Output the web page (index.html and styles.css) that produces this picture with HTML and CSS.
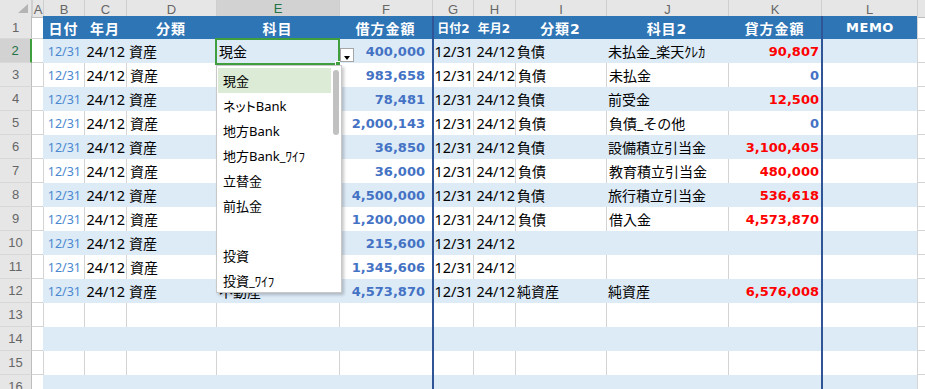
FILE: index.html
```html
<!DOCTYPE html>
<html lang="ja">
<head>
<meta charset="utf-8">
<title>Sheet</title>
<link rel="stylesheet" href="styles.css">
</head>
<body>
<div class="sheet">
  <div class="row colhdr">
    <div class="hd corner"><svg width="32" height="16" viewBox="0 0 32 16"><polygon points="18,13 28,13 28,4" fill="#b4b4b4"/></svg></div>
    <div class="hd">A</div><div class="hd">B</div><div class="hd">C</div><div class="hd">D</div>
    <div class="hd act">E</div><div class="hd">F</div><div class="hd">G</div><div class="hd">H</div>
    <div class="hd">I</div><div class="hd">J</div><div class="hd">K</div><div class="hd">L</div><div class="hd"></div>
  </div>

  <div class="row hdr">
    <div class="rn">1</div><div class="c-a"></div>
    <div class="d">日付</div><div class="d">年月</div><div class="d">分類</div><div class="d">科目</div>
    <div class="d">借方金額</div><div class="d c-g sm">日付2</div><div class="d sm">年月2</div>
    <div class="d">分類2</div><div class="d">科目2</div><div class="d">貸方金額</div><div class="d c-l memo">MEMO</div>
    <div class="c-m"></div>
  </div>

  <div class="row alt">
    <div class="rn act">2</div><div class="c-a"></div>
    <div class="d c-b">12/31</div><div class="d c-c">24/12</div><div class="d c-d">資産</div><div class="d c-e">現金</div>
    <div class="d c-f amt blue">400,000</div><div class="d c-g">12/31</div><div class="d c-h">24/12</div>
    <div class="d c-i">負債</div><div class="d c-j">未払金_楽天ｸﾚｶ</div><div class="d c-k amt red">90,807</div><div class="d c-l"></div>
    <div class="c-m"></div>
  </div>

  <div class="row w">
    <div class="rn">3</div><div class="c-a"></div>
    <div class="d c-b">12/31</div><div class="d c-c">24/12</div><div class="d c-d">資産</div><div class="d c-e"></div>
    <div class="d c-f amt blue">983,658</div><div class="d c-g">12/31</div><div class="d c-h">24/12</div>
    <div class="d c-i">負債</div><div class="d c-j">未払金</div><div class="d c-k amt blue">0</div><div class="d c-l"></div>
    <div class="c-m"></div>
  </div>

  <div class="row alt">
    <div class="rn">4</div><div class="c-a"></div>
    <div class="d c-b">12/31</div><div class="d c-c">24/12</div><div class="d c-d">資産</div><div class="d c-e"></div>
    <div class="d c-f amt blue">78,481</div><div class="d c-g">12/31</div><div class="d c-h">24/12</div>
    <div class="d c-i">負債</div><div class="d c-j">前受金</div><div class="d c-k amt red">12,500</div><div class="d c-l"></div>
    <div class="c-m"></div>
  </div>

  <div class="row w">
    <div class="rn">5</div><div class="c-a"></div>
    <div class="d c-b">12/31</div><div class="d c-c">24/12</div><div class="d c-d">資産</div><div class="d c-e"></div>
    <div class="d c-f amt blue">2,000,143</div><div class="d c-g">12/31</div><div class="d c-h">24/12</div>
    <div class="d c-i">負債</div><div class="d c-j">負債_その他</div><div class="d c-k amt blue">0</div><div class="d c-l"></div>
    <div class="c-m"></div>
  </div>

  <div class="row alt">
    <div class="rn">6</div><div class="c-a"></div>
    <div class="d c-b">12/31</div><div class="d c-c">24/12</div><div class="d c-d">資産</div><div class="d c-e"></div>
    <div class="d c-f amt blue">36,850</div><div class="d c-g">12/31</div><div class="d c-h">24/12</div>
    <div class="d c-i">負債</div><div class="d c-j">設備積立引当金</div><div class="d c-k amt red">3,100,405</div><div class="d c-l"></div>
    <div class="c-m"></div>
  </div>

  <div class="row w">
    <div class="rn">7</div><div class="c-a"></div>
    <div class="d c-b">12/31</div><div class="d c-c">24/12</div><div class="d c-d">資産</div><div class="d c-e"></div>
    <div class="d c-f amt blue">36,000</div><div class="d c-g">12/31</div><div class="d c-h">24/12</div>
    <div class="d c-i">負債</div><div class="d c-j">教育積立引当金</div><div class="d c-k amt red">480,000</div><div class="d c-l"></div>
    <div class="c-m"></div>
  </div>

  <div class="row alt">
    <div class="rn">8</div><div class="c-a"></div>
    <div class="d c-b">12/31</div><div class="d c-c">24/12</div><div class="d c-d">資産</div><div class="d c-e"></div>
    <div class="d c-f amt blue">4,500,000</div><div class="d c-g">12/31</div><div class="d c-h">24/12</div>
    <div class="d c-i">負債</div><div class="d c-j">旅行積立引当金</div><div class="d c-k amt red">536,618</div><div class="d c-l"></div>
    <div class="c-m"></div>
  </div>

  <div class="row w">
    <div class="rn">9</div><div class="c-a"></div>
    <div class="d c-b">12/31</div><div class="d c-c">24/12</div><div class="d c-d">資産</div><div class="d c-e"></div>
    <div class="d c-f amt blue">1,200,000</div><div class="d c-g">12/31</div><div class="d c-h">24/12</div>
    <div class="d c-i">負債</div><div class="d c-j">借入金</div><div class="d c-k amt red">4,573,870</div><div class="d c-l"></div>
    <div class="c-m"></div>
  </div>

  <div class="row alt">
    <div class="rn">10</div><div class="c-a"></div>
    <div class="d c-b">12/31</div><div class="d c-c">24/12</div><div class="d c-d">資産</div><div class="d c-e"></div>
    <div class="d c-f amt blue">215,600</div><div class="d c-g">12/31</div><div class="d c-h">24/12</div>
    <div class="d c-i"></div><div class="d c-j"></div><div class="d c-k"></div><div class="d c-l"></div>
    <div class="c-m"></div>
  </div>

  <div class="row w">
    <div class="rn">11</div><div class="c-a"></div>
    <div class="d c-b">12/31</div><div class="d c-c">24/12</div><div class="d c-d">資産</div><div class="d c-e"></div>
    <div class="d c-f amt blue">1,345,606</div><div class="d c-g">12/31</div><div class="d c-h">24/12</div>
    <div class="d c-i"></div><div class="d c-j"></div><div class="d c-k"></div><div class="d c-l"></div>
    <div class="c-m"></div>
  </div>

  <div class="row alt">
    <div class="rn">12</div><div class="c-a"></div>
    <div class="d c-b">12/31</div><div class="d c-c">24/12</div><div class="d c-d">資産</div><div class="d c-e under">不動産</div>
    <div class="d c-f amt blue">4,573,870</div><div class="d c-g">12/31</div><div class="d c-h">24/12</div>
    <div class="d c-i">純資産</div><div class="d c-j">純資産</div><div class="d c-k amt red">6,576,008</div><div class="d c-l"></div>
    <div class="c-m"></div>
  </div>

  <div class="row w">
    <div class="rn">13</div><div class="c-a"></div>
    <div class="d"></div><div class="d"></div><div class="d"></div><div class="d"></div><div class="d"></div>
    <div class="d c-g"></div><div class="d"></div><div class="d"></div><div class="d"></div><div class="d"></div><div class="d c-l"></div>
    <div class="c-m"></div>
  </div>
  <div class="row alt">
    <div class="rn">14</div><div class="c-a"></div>
    <div class="d"></div><div class="d"></div><div class="d"></div><div class="d"></div><div class="d"></div>
    <div class="d c-g"></div><div class="d"></div><div class="d"></div><div class="d"></div><div class="d"></div><div class="d c-l"></div>
    <div class="c-m"></div>
  </div>
  <div class="row w">
    <div class="rn">15</div><div class="c-a"></div>
    <div class="d"></div><div class="d"></div><div class="d"></div><div class="d"></div><div class="d"></div>
    <div class="d c-g"></div><div class="d"></div><div class="d"></div><div class="d"></div><div class="d"></div><div class="d c-l"></div>
    <div class="c-m"></div>
  </div>
  <div class="row alt">
    <div class="rn">16</div><div class="c-a"></div>
    <div class="d"></div><div class="d"></div><div class="d"></div><div class="d"></div><div class="d"></div>
    <div class="d c-g"></div><div class="d"></div><div class="d"></div><div class="d"></div><div class="d"></div><div class="d c-l"></div>
    <div class="c-m"></div>
  </div>

  <div class="selbox"></div>
  <div class="handle"></div>
  <div class="ddbtn"><span class="tri"></span></div>
  <div class="ddlist">
    <div class="item on">現金</div>
    <div class="item">ネットBank</div>
    <div class="item">地方Bank</div>
    <div class="item">地方Bank_ﾜｲﾌ</div>
    <div class="item">立替金</div>
    <div class="item">前払金</div>
    <div class="item"></div>
    <div class="item">投資</div>
    <div class="item">投資_ﾜｲﾌ</div>
    <div class="thumb"></div>
  </div>
</div>
</body>
</html>
```

FILE: styles.css
```css
html, body {
  margin: 0;
  padding: 0;
  background: #ffffff;
  overflow: hidden;
}

.sheet {
  position: relative;
  width: 925px;
  height: 389px;
  overflow: hidden;
  font-family: "Noto Sans", "Noto Sans CJK JP", sans-serif;
}

.row {
  display: grid;
  grid-template-columns: 32px 11px 41px 42px 90px 123px 93px 41px 42px 91px 122px 93px 96px 1fr;
  height: 24px;
}

.row > div {
  box-sizing: border-box;
  display: flex;
  align-items: center;
  white-space: nowrap;
  min-width: 0;
}

/* column header strip */
.row.colhdr {
  height: 16px;
}
.hd {
  background: #e6e6e6;
  border-left: 1px solid #cfcfcf;
  border-bottom: 1px solid #bdbdbd;
  justify-content: center;
  font-family: "Liberation Sans", sans-serif;
  font-size: 13px;
  color: #666666;
  padding-top: 1px;
}
.hd.corner {
  border-left: none;
  border-right: 1px solid #cfcfcf;
  padding: 0;
  display: block;
}
.hd.corner svg {
  display: block;
}
.hd.act {
  background: #d2d2d2;
  color: #217346;
  border-bottom: 2px solid #3f9f3f;
}

/* row numbers */
.rn {
  background: #e6e6e6;
  border-right: 1px solid #bdbdbd;
  border-bottom: 1px solid #d8d8d8;
  justify-content: center;
  font-family: "Liberation Sans", sans-serif;
  font-size: 13px;
  color: #666666;
}
.rn.act {
  background: #d2d2d2;
  color: #217346;
  border-right: 2px solid #3f9f3f;
}

.c-a {
  border-bottom: 1px solid #d4d4d4;
}
.c-m {
  border-left: 1px solid #d4d4d4;
  border-bottom: 1px solid #d4d4d4;
}

/* header row */
.row.hdr {
  height: 23px;
}
.hdr .d {
  background: #2e75b6;
  color: #ffffff;
  font-family: "DejaVu Sans", "Noto Sans CJK JP", sans-serif;
  font-weight: bold;
  font-size: 14px;
  letter-spacing: 1px;
  justify-content: center;
}
.hdr .d.sm {
  font-size: 12px;
  letter-spacing: 0;
}
.hdr .d.memo {
  font-size: 13px;
  letter-spacing: 0.5px;
}

/* data rows */
.d {
  font-size: 14.5px;
  color: #000000;
}
.alt .d {
  background: #ddebf7;
}
.w .d {
  border-left: 1px solid #d4d4d4;
}
.row .c-g,
.row .c-l {
  border-left: 2px solid #2f5597;
}

.c-b {
  justify-content: flex-end;
  padding-right: 3px;
  font-size: 12.5px;
  color: #4a88d0;
}
.c-c {
  justify-content: flex-end;
  padding-right: 1px;
}
.c-d,
.c-e {
  padding-left: 3px;
  font-size: 14px;
}
.c-g,
.c-h {
  justify-content: flex-end;
  padding-right: 0;
}
.c-i,
.c-j {
  padding-left: 2px;
  font-size: 14px;
}
.amt {
  justify-content: flex-end;
  font-family: "DejaVu Sans", sans-serif;
  font-weight: bold;
  font-size: 13px;
}
.c-f {
  padding-right: 7px;
}
.c-k {
  padding-right: 2px;
}
.blue {
  color: #4472c4;
}
.red {
  color: #ff0000;
}

/* selection + dropdown overlay */
.selbox {
  position: absolute;
  left: 215px;
  top: 38px;
  width: 125px;
  height: 27px;
  box-sizing: border-box;
  border: 2px solid #3f9f3f;
}
.handle {
  position: absolute;
  left: 335px;
  top: 61px;
  width: 6px;
  height: 6px;
  box-sizing: border-box;
  background: #3f9f3f;
  border: 1px solid #ffffff;
}
.ddbtn {
  position: absolute;
  left: 340px;
  top: 48px;
  width: 14px;
  height: 14px;
  box-sizing: border-box;
  background: #ffffff;
  border: 1px solid #a6a6a6;
}
.tri {
  position: absolute;
  left: 3px;
  top: 7px;
  width: 0;
  height: 0;
  border-left: 3.5px solid transparent;
  border-right: 3.5px solid transparent;
  border-top: 4px solid #000000;
}
.ddlist {
  position: absolute;
  left: 216px;
  top: 65px;
  width: 126px;
  height: 228px;
  box-sizing: border-box;
  background: #ffffff;
  border: 1px solid #c8c8c8;
  padding: 2px 0 0 1px;
  box-shadow: 2px 2px 3px rgba(0, 0, 0, 0.22);
  font-family: "Noto Sans", "Noto Sans CJK JP", sans-serif;
}
.item {
  width: 113px;
  height: 25px;
  box-sizing: border-box;
  padding-left: 5px;
  display: flex;
  align-items: center;
  font-size: 13px;
  font-feature-settings: "palt";
  color: #000000;
  white-space: nowrap;
}
.item.on {
  background: #dcebd5;
}
.thumb {
  position: absolute;
  left: 116px;
  top: 4px;
  width: 6px;
  height: 65px;
  border-radius: 3px;
  background: #c1c1c1;
}
```
